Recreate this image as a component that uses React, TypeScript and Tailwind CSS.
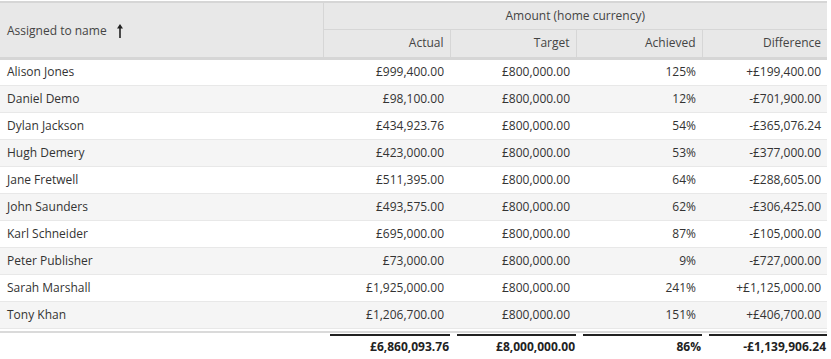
const rows = [
  ['Alison Jones', '£999,400.00', '£800,000.00', '125%', '+£199,400.00'],
  ['Daniel Demo', '£98,100.00', '£800,000.00', '12%', '-£701,900.00'],
  ['Dylan Jackson', '£434,923.76', '£800,000.00', '54%', '-£365,076.24'],
  ['Hugh Demery', '£423,000.00', '£800,000.00', '53%', '-£377,000.00'],
  ['Jane Fretwell', '£511,395.00', '£800,000.00', '64%', '-£288,605.00'],
  ['John Saunders', '£493,575.00', '£800,000.00', '62%', '-£306,425.00'],
  ['Karl Schneider', '£695,000.00', '£800,000.00', '87%', '-£105,000.00'],
  ['Peter Publisher', '£73,000.00', '£800,000.00', '9%', '-£727,000.00'],
  ['Sarah Marshall', '£1,925,000.00', '£800,000.00', '241%', '+£1,125,000.00'],
  ['Tony Khan', '£1,206,700.00', '£800,000.00', '151%', '+£406,700.00'],
]

const totals = ['£6,860,093.76', '£8,000,000.00', '86%', '-£1,139,906.24']

function SortUp() {
  return (
    <svg width="6" height="14" viewBox="0 0 6 14" className="ml-[10px] inline-block">
      <path d="M3 0 L6 4.5 L3.8 4.5 L3.8 14 L2.2 14 L2.2 4.5 L0 4.5 Z" fill="#222" />
    </svg>
  )
}

export default function App() {
  return (
    <div className="bg-white pt-px font-['Open_Sans',sans-serif] text-[12px] text-[#333]">
      <table className="w-[827px] table-fixed border-collapse">
        <colgroup>
          <col className="w-[323px]" />
          <col className="w-[127px]" />
          <col className="w-[126px]" />
          <col className="w-[126px]" />
          <col className="w-[125px]" />
        </colgroup>
        <thead className="bg-[#e8e8e8] text-[#444]">
          <tr className="h-[27px] border-t-2 border-[#d6d6d6]">
            <th rowSpan={2} className="border-r border-[#d6d6d6] pl-[7px] pt-[2px] text-left font-normal">
              <span className="inline-flex items-center">
                Assigned to name
                <SortUp />
              </span>
            </th>
            <th colSpan={4} className="border-b border-[#d6d6d6] text-center font-normal">
              Amount (home currency)
            </th>
          </tr>
          <tr className="h-[29px] border-b-[3px] border-[#d6d6d6]">
            <th className="border-r border-[#d6d6d6] pr-[6px] text-right font-normal">Actual</th>
            <th className="border-r border-[#d6d6d6] pr-[6px] text-right font-normal">Target</th>
            <th className="border-r border-[#d6d6d6] pr-[6px] text-right font-normal">Achieved</th>
            <th className="pr-[6px] text-right font-normal">Difference</th>
          </tr>
        </thead>
        <tbody>
          {rows.map((r, i) => (
            <tr
              key={r[0]}
              className={`h-[27px] border-b border-[#e8e8e8] ${i % 2 === 1 ? 'bg-[#f5f5f5]' : 'bg-white'}`}
            >
              <td className="pl-[7px]">{r[0]}</td>
              <td className="pr-[6px] text-right">{r[1]}</td>
              <td className="pr-[6px] text-right">{r[2]}</td>
              <td className="pr-[6px] text-right">{r[3]}</td>
              <td className="pr-[6px] text-right">{r[4]}</td>
            </tr>
          ))}
        </tbody>
        <tfoot>
          <tr className="h-[4px]">
            <td colSpan={5} />
          </tr>
          <tr className="border-t-[2px] border-[#dadada]">
            <td />
            {totals.map(t => (
              <td key={t} className="pl-[7px] pt-px align-top">
                <div className="border-t-2 border-[#222] pr-[1px] pt-[1px] text-right font-bold text-[#222] leading-[20px]">
                  {t}
                </div>
              </td>
            ))}
          </tr>
        </tfoot>
      </table>
    </div>
  )
}
